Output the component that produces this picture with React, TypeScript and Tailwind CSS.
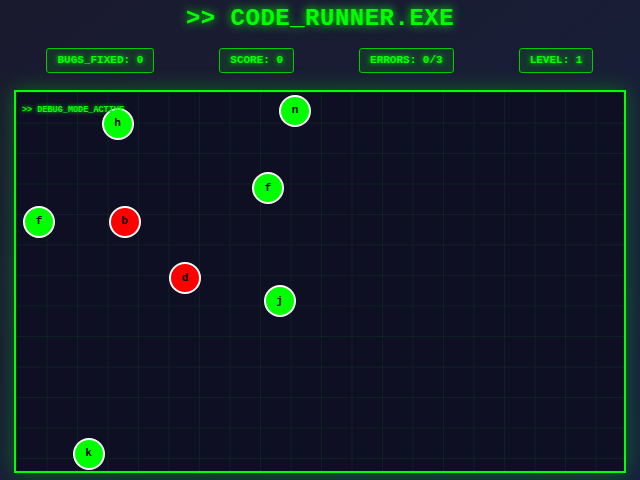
import React from 'react';

type Bug = { id: number; letter: string; left: number; top: number; bad?: boolean };

const bugs: Bug[] = [
  { id: 1, letter: 'h', left: 85.5, top: 15.5 },
  { id: 2, letter: 'n', left: 263, top: 2.5 },
  { id: 3, letter: 'f', left: 236, top: 80 },
  { id: 4, letter: 'f', left: 7, top: 113.5 },
  { id: 5, letter: 'b', left: 92.5, top: 113.5, bad: true },
  { id: 6, letter: 'd', left: 153, top: 170, bad: true },
  { id: 7, letter: 'j', left: 247.5, top: 193 },
  { id: 8, letter: 'k', left: 56.5, top: 345.5 },
];

const stats = ['BUGS_FIXED: 0', 'SCORE: 0', 'ERRORS: 0/3', 'LEVEL: 1'];

export default function App() {
  return (
    <div className="w-full h-[480px] overflow-hidden bg-gradient-to-br from-[#1a1a2e] to-[#16213e] px-[14px] pt-[3px] font-['Liberation_Mono','Courier_New',monospace] text-[#00ff00]">
      <h1 className="text-center text-[24px] leading-8 font-bold tracking-[0.5px] [text-shadow:0_0_10px_#00ff00]">
        &gt;&gt; CODE_RUNNER.EXE
      </h1>

      <div className="mt-[13px] flex justify-around">
        {stats.map((s) => (
          <div
            key={s}
            className="border border-[#00cc00] bg-[rgba(0,255,0,0.1)] rounded-[3px] px-[10px] py-[4px] text-[11px] leading-[15px] font-bold whitespace-pre [text-shadow:0_0_5px_#00ff00]"
          >
            {s}
          </div>
        ))}
      </div>

      <div className="relative mt-[17px] h-[383px] border-2 border-[#00ff00] bg-[#0f0f23] shadow-[0_0_20px_rgba(0,255,0,0.3)] overflow-hidden">
        <div className="absolute inset-0 bg-[linear-gradient(rgba(0,255,0,0.07)_1px,transparent_1px),linear-gradient(90deg,rgba(0,255,0,0.07)_1px,transparent_1px)] bg-[size:30.5px_30.5px]" />

        {bugs.map((b) => (
          <div
            key={b.id}
            className={`absolute w-8 h-8 rounded-full border-2 border-white flex items-center justify-center text-[11px] font-bold text-black ${
              b.bad ? 'bg-[#ff0000]' : 'bg-[#00ff00]'
            }`}
            style={{ left: b.left, top: b.top }}
          >
            {b.letter}
          </div>
        ))}

        <div className="absolute z-10 left-[6px] top-[12px] text-[8.5px] leading-3 font-bold text-[#00ff00] [text-shadow:0_0_4px_#00ff00]">
          &gt;&gt; DEBUG_MODE_ACTIVE
        </div>
      </div>
    </div>
  );
}
